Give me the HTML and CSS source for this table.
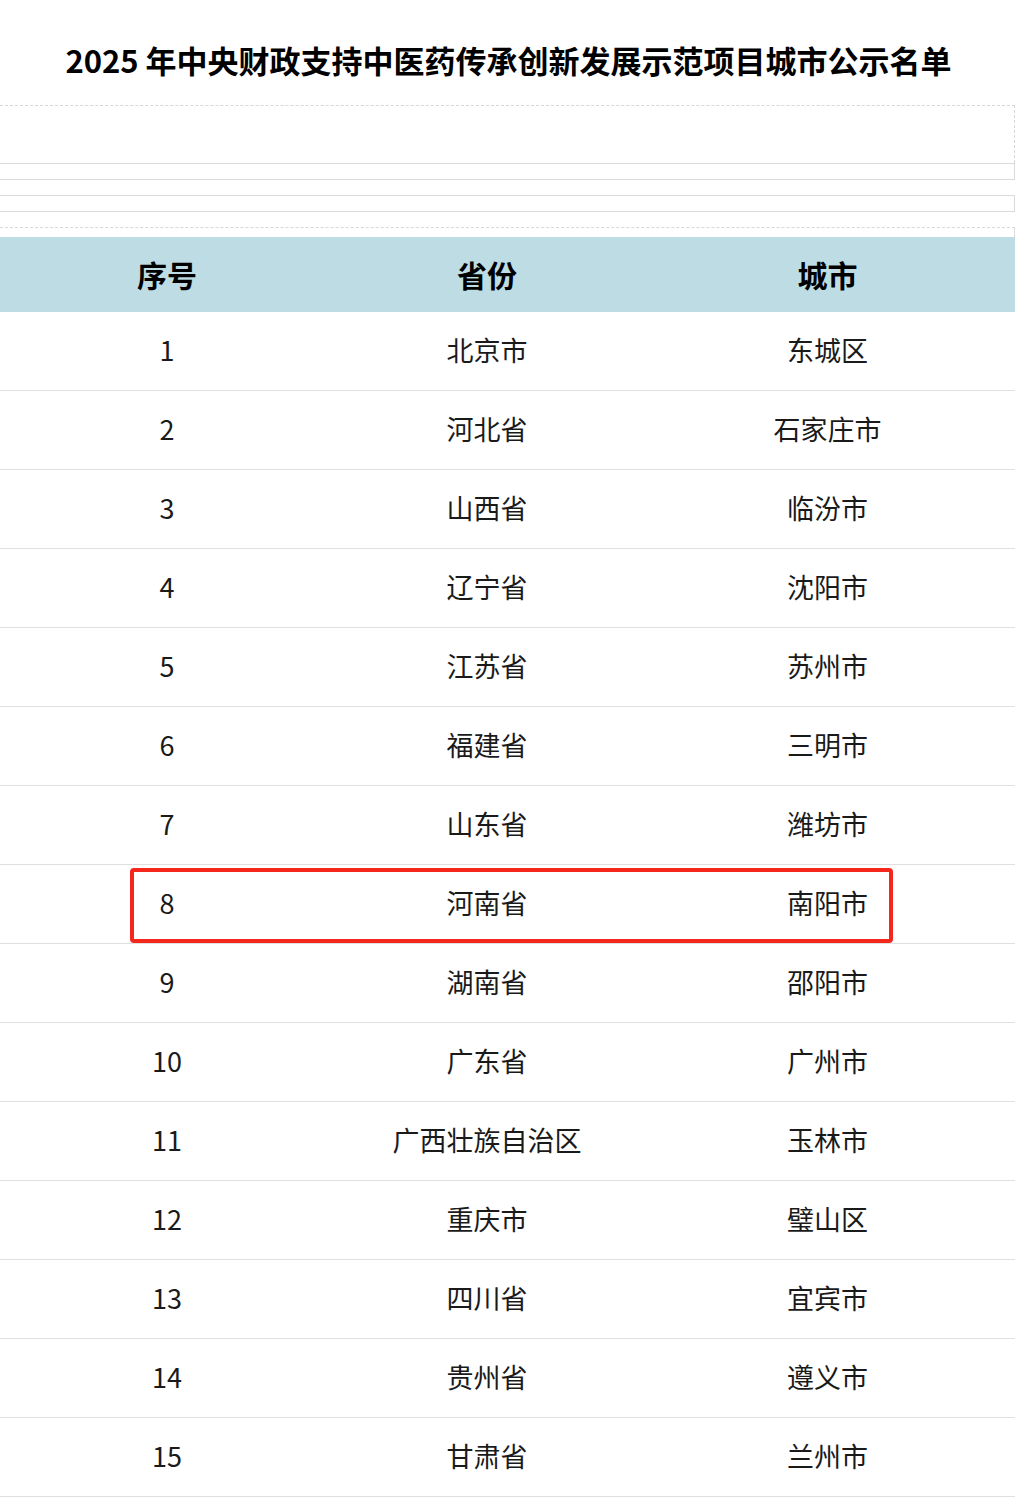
FILE: index.html
```html
<!DOCTYPE html>
<html lang="zh-CN">
<head>
<meta charset="utf-8">
<title>2025 年中央财政支持中医药传承创新发展示范项目城市公示名单</title>
<link rel="stylesheet" href="styles.css">
</head>
<body>
<h1 class="title">2025 年中央财政支持中医药传承创新发展示范项目城市公示名单</h1>
<div class="frame">
  <div class="box-dashed"></div>
  <div class="box-solid"></div>
  <div class="box-solid spaced"></div>
  <div class="box-dashed small"></div>
</div>
<div class="table">
  <div class="row head"><div>序号</div><div>省份</div><div>城市</div></div>
  <div class="row"><div>1</div><div>北京市</div><div>东城区</div></div>
  <div class="row"><div>2</div><div>河北省</div><div>石家庄市</div></div>
  <div class="row"><div>3</div><div>山西省</div><div>临汾市</div></div>
  <div class="row"><div>4</div><div>辽宁省</div><div>沈阳市</div></div>
  <div class="row"><div>5</div><div>江苏省</div><div>苏州市</div></div>
  <div class="row"><div>6</div><div>福建省</div><div>三明市</div></div>
  <div class="row"><div>7</div><div>山东省</div><div>潍坊市</div></div>
  <div class="row marked"><div>8</div><div>河南省</div><div>南阳市</div><span class="highlight"></span></div>
  <div class="row"><div>9</div><div>湖南省</div><div>邵阳市</div></div>
  <div class="row"><div>10</div><div>广东省</div><div>广州市</div></div>
  <div class="row"><div>11</div><div>广西壮族自治区</div><div>玉林市</div></div>
  <div class="row"><div>12</div><div>重庆市</div><div>璧山区</div></div>
  <div class="row"><div>13</div><div>四川省</div><div>宜宾市</div></div>
  <div class="row"><div>14</div><div>贵州省</div><div>遵义市</div></div>
  <div class="row"><div>15</div><div>甘肃省</div><div>兰州市</div></div>
</div>
</body>
</html>
```

FILE: styles.css
```css
html, body {
  margin: 0;
  padding: 0;
  background: #fff;
}
body {
  font-family: "Microsoft YaHei", "Noto Sans CJK SC", "Noto Sans", sans-serif;
  color: #111;
  width: 1017px;
  overflow: hidden;
}
.title {
  margin: 0;
  padding-top: 40px;
  height: 40px;
  line-height: 40px;
  font-size: 31px;
  font-weight: 700;
  text-align: center;
  color: #000;
}
.frame {
  margin-top: 25px;
  width: 1015px;
}
.box-dashed {
  height: 57px;
  border-top: 1px dashed #d8d8d8;
  border-right: 1px dashed #d8d8d8;
}
.box-dashed.small {
  height: 9px;
  margin-top: 15px;
}
.box-solid {
  height: 15px;
  border: 1px solid #dadada;
  border-left: none;
}
.box-solid.spaced {
  margin-top: 15px;
}
.table {
  width: 1015px;
}
.row {
  display: grid;
  grid-template-columns: 334px 306px 1fr;
  height: 76px;
  padding-bottom: 2px;
  border-bottom: 1px solid #e0e0e0;
  align-items: center;
  text-align: center;
  font-size: 27px;
  color: #1a1a1a;
  position: relative;
}
.row > div {
  line-height: 76px;
}
.row.head {
  height: 75px;
  padding-bottom: 0;
  border-bottom: none;
  background: #bedce3;
  font-weight: 700;
  font-size: 30px;
  color: #000;
}
.row.head > div {
  line-height: 75px;
}
.highlight {
  position: absolute;
  left: 130px;
  top: 3px;
  width: 755px;
  height: 67px;
  border: 4px solid #f5261b;
  border-radius: 4px;
}
```
